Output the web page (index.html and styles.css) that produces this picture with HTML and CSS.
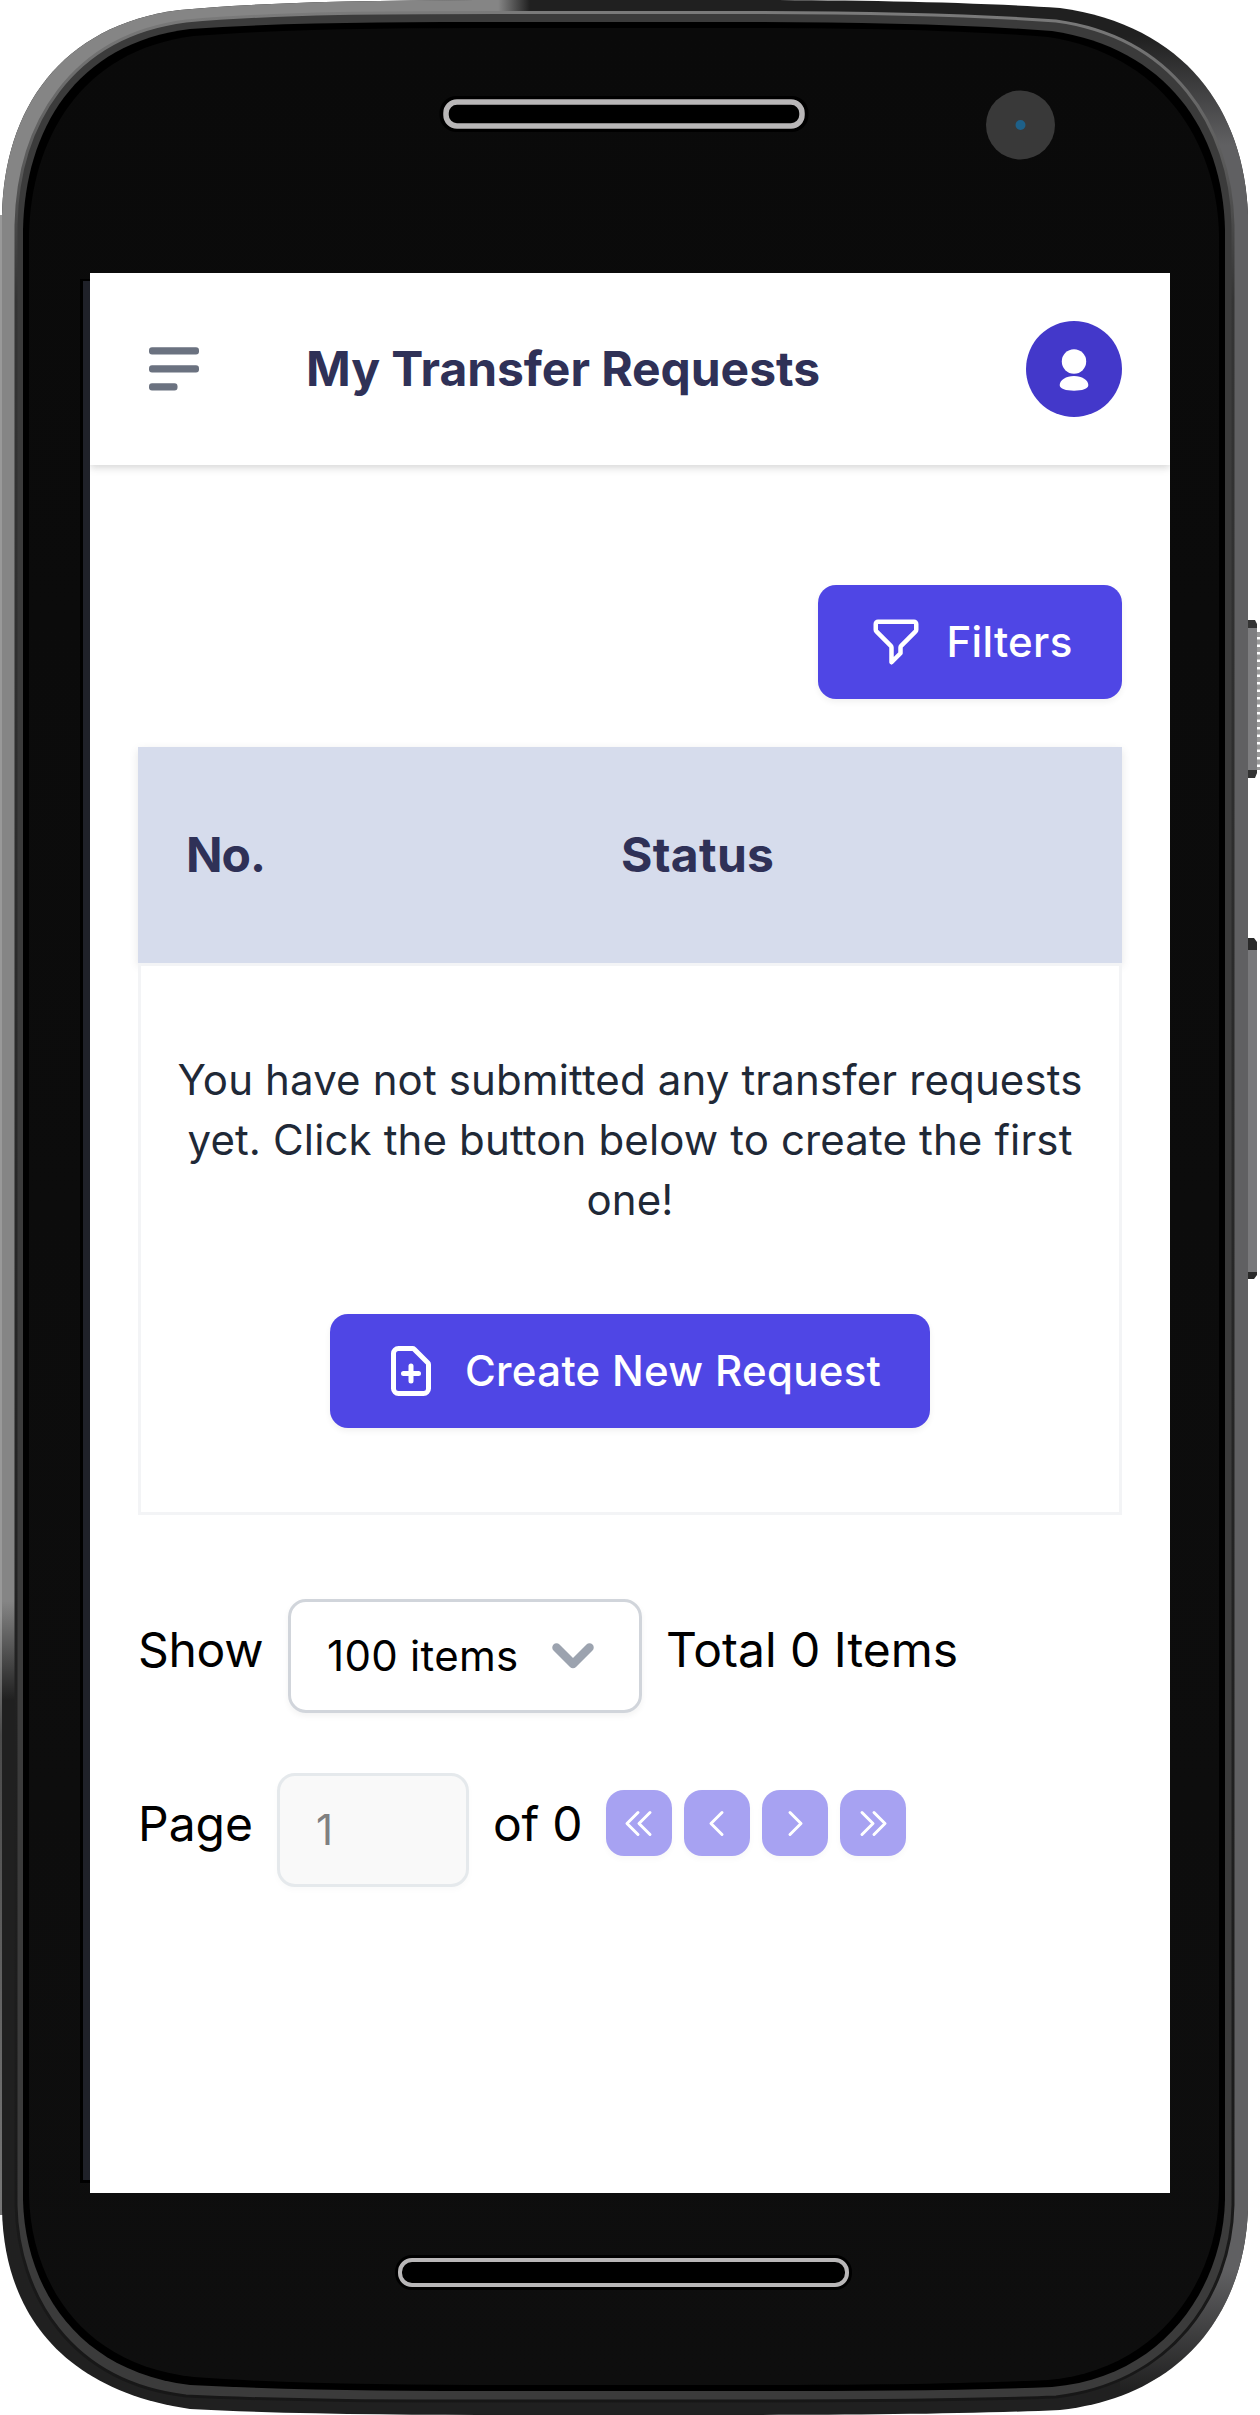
FILE: index.html
```html
<!DOCTYPE html>
<html lang="en">
<head>
<meta charset="utf-8">
<title>My Transfer Requests</title>
<link rel="stylesheet" href="styles.css">
</head>
<body>
<div class="device">
  <svg class="frame" viewBox="0 0 1260 2415" aria-hidden="true">
    <defs>
      <path id="shell" d="M2 215C4 110 60 25 180 10C280 1 400 0 520 0H740C850 0 970 2 1060 8C1185 25 1244 110 1248 215V2210C1244 2310 1185 2396 1060 2410C970 2414 850 2415 740 2415H510C400 2415 280 2414 190 2409C60 2390 4 2310 2 2210Z"/>
      <clipPath id="shell-clip"><use href="#shell"/></clipPath>
      <linearGradient id="top-light"><stop offset=".94" stop-color="#858585"/><stop offset="1" stop-color="#858585" stop-opacity="0"/></linearGradient>
      <linearGradient id="left-light" x2="0" y2="1"><stop offset=".93" stop-color="#858585"/><stop offset="1" stop-color="#858585" stop-opacity="0"/></linearGradient>
      <linearGradient id="right-light" x2="0" y2="1"><stop offset=".015" stop-color="#606062" stop-opacity="0"/><stop offset=".06" stop-color="#606062"/><stop offset=".94" stop-color="#606062"/><stop offset=".99" stop-color="#606062" stop-opacity="0"/></linearGradient>
      <linearGradient id="edge" x2="0" y2="1"><stop offset=".7" stop-color="#999"/><stop offset=".76" stop-color="#4a4a4a"/><stop offset="1" stop-color="#777"/></linearGradient>
      <linearGradient id="rim" x2="0" y2="1"><stop offset="0" stop-color="#7a7a7a"/><stop offset=".06" stop-color="#5c5c5c"/><stop offset=".12" stop-color="#343434"/><stop offset="1" stop-color="#171717"/></linearGradient>
      <linearGradient id="glass" x2="0" y2="1"><stop offset="0" stop-color="#0a0a0a"/><stop offset="1" stop-color="#0e0e0e"/></linearGradient>
    </defs>
    <path d="M0 215h3v2000H0z" fill="url(#edge)"/>
    <path d="M1246 620h9l2 4v149l-2 5h-9z" fill="#333"/>
    <path d="M1246 628h11v142h-11z" fill="#7e7e80"/>
    <path d="M1258.500 632v138" stroke="#999" stroke-width="3" stroke-dasharray="5 2.500"/>
    <path d="M1246 938h8l3 4v333l-3 4h-8z" fill="#2a2a2a"/>
    <path d="M1246 950h11v322h-11z" fill="#79797b"/>
    <use href="#shell" fill="#202020"/>
    <g clip-path="url(#shell-clip)">
      <path d="M0 0h530v300H0z" fill="url(#top-light)"/>
      <path d="M0 290h30v1410H0z" fill="url(#left-light)"/>
      <path d="M1120 0h130v2415h-130z" fill="url(#right-light)"/>
    </g>
    <path d="M16 225C18 125 70 36 186 21C290 12 400 12.500 520 12.500H740C850 12.500 960 14 1056 21C1172 37 1231 125 1233 225V2205C1231 2295 1172 2383 1056 2397C960 2401 850 2401 740 2401H520C400 2401 290 2401 186 2396C70 2382 18 2295 16 2205Z" fill="#3b3b3b" stroke="url(#rim)" stroke-width="3"/>
    <path d="M23 230C25 130 75 43 190 29C290 22 400 22 520 22H740C850 22 960 24 1052 31C1166 48 1223 130 1225 230V2200C1223 2285 1166 2377 1052 2387C960 2391 850 2391 740 2391H520C400 2391 290 2390 190 2385C75 2371 25 2285 23 2200Z" fill="#000"/>
    <path d="M29 235C31 140 80 50 194 36C290 28.500 400 28 520 28H740C850 28 960 30 1048 37C1160 54 1217 140 1219 235V2195C1217 2280 1160 2370 1048 2380C960 2384 850 2385 740 2385H520C400 2385 290 2384 194 2377C80 2365 31 2280 29 2195Z" fill="url(#glass)"/>
    <path d="M80 279h10v1904H80z" fill="#000"/>
    <path d="M83 281h7v1899h-7z" fill="#1f2129"/>
    <rect x="445.500" y="102" width="357" height="24" rx="11" fill="#000" stroke="#000" stroke-width="12"/>
    <rect x="446" y="102" width="356" height="24" rx="11" fill="#000" stroke="#b9b7b8" stroke-width="5.500"/>
    <circle cx="1020.500" cy="125" r="34.500" fill="#393939"/>
    <circle cx="1020.500" cy="125" r="5" fill="#1e6088"/>
    <rect x="400" y="2260" width="447" height="25" rx="12" fill="#000" stroke="#000" stroke-width="10"/>
    <rect x="400" y="2260" width="447" height="25" rx="12" fill="#000" stroke="#b9b7b8" stroke-width="4"/>
  </svg>

  <div class="screen">
    <header class="topbar">
      <svg class="menu-icon" viewBox="0 0 50 44"><g fill="#6b7280"><rect width="50" height="7.300" y=".3" rx="3"/><rect width="50" height="7.300" y="18.300" rx="3"/><rect width="28.500" height="7.300" y="36.300" rx="3"/></g></svg>
      <h1 class="title">My Transfer Requests</h1>
      <div class="avatar">
        <svg viewBox="0 0 96 96"><g fill="#fff"><circle cx="48" cy="40.500" r="12.200"/><path d="M48 55C56 55 62.300 59 62.300 64C62.300 68 56 69.700 48 69.700S33.700 68 33.700 64C33.700 59 40 55 48 55Z"/></g></svg>
      </div>
    </header>

    <main class="content">
      <div class="toolbar">
        <button class="btn btn-filter">
          <svg viewBox="0 0 24 24"><path d="M3 4a1 1 0 011-1h16a1 1 0 011 1v2.586a1 1 0 01-.293.707l-6.414 6.414a1 1 0 00-.293.707V17l-4 4v-6.586a1 1 0 00-.293-.707L3.293 7.293A1 1 0 013 6.586V4z"/></svg>
          <span>Filters</span>
        </button>
      </div>

      <section class="table">
        <div class="table-head"><span class="col-no">No.</span><span class="col-status">Status</span></div>
        <div class="table-body">
          <p class="empty">You have not submitted any transfer requests yet. Click the button below to create the first one!</p>
          <button class="btn btn-create">
            <svg viewBox="0 0 24 24"><path d="M9 13h6m-3-3v6m5 5H7a2 2 0 01-2-2V5a2 2 0 012-2h5.586a1 1 0 01.707.293l5.414 5.414a1 1 0 01.293.707V19a2 2 0 01-2 2z"/></svg>
            <span>Create New Request</span>
          </button>
        </div>
      </section>

      <div class="pager-row">
        <span class="label-show">Show</span>
        <div class="select"><span>100 items</span><svg viewBox="0 0 42 27"><path d="M4.500 4.500L21 21L37.500 4.500"/></svg></div>
        <span>Total 0 Items</span>
      </div>
      <div class="pager-row pager-pages">
        <span class="label-page">Page</span>
        <div class="page-input">1</div>
        <span class="label-of">of 0</span>
        <div class="nav">
          <span class="nav-btn"><svg viewBox="0 0 66 66"><path d="M32 22.500L21 33.500L32 44.500M44 22.500L33 33.500L44 44.500"/></svg></span>
          <span class="nav-btn"><svg viewBox="0 0 66 66"><path d="M38 22.500L27 33.500L38 44.500"/></svg></span>
          <span class="nav-btn"><svg viewBox="0 0 66 66"><path d="M28 22.500L39 33.500L28 44.500"/></svg></span>
          <span class="nav-btn"><svg viewBox="0 0 66 66"><path d="M22 22.500L33 33.500L22 44.500M34 22.500L45 33.500L34 44.500"/></svg></span>
        </div>
      </div>
    </main>
  </div>
</div>
</body>
</html>
```
FILE: styles.css
```css
* { box-sizing: border-box; }
body { margin: 0; background: #fff; font-family: Inter, "Liberation Sans", sans-serif; color: #000; }
.device { position: relative; width: 1260px; height: 2415px; padding: 273px 90px 222px; overflow: hidden; }
.frame { position: absolute; inset: 0; width: 1260px; height: 2415px; }
.screen { position: relative; height: 1920px; background: #fff; overflow: hidden; }

.topbar { height: 192px; display: flex; align-items: center; padding: 0 48px 0 59px; background: #fff; box-shadow: 0 3px 9px rgba(0,0,0,.1), 0 3px 6px rgba(0,0,0,.06); }
.menu-icon { width: 50px; height: 44px; }
.title { margin: 0 0 0 107px; font-size: 48px; line-height: 72px; font-weight: 700; letter-spacing: -.06px; color: #2f3157; white-space: nowrap; }
.avatar { margin-left: auto; width: 96px; height: 96px; border-radius: 50%; background: #4338ca; }
.avatar svg { display: block; }

.content { padding: 120px 48px 0; }
.toolbar { display: flex; justify-content: flex-end; }
.btn { display: flex; align-items: center; height: 114px; padding: 0; border: 0; border-radius: 18px; background: #4f46e5; color: #fff; font: 460 42px/60px Inter, "Liberation Sans", sans-serif; letter-spacing: .3px; white-space: nowrap; box-shadow: 0 3px 6px rgba(0,0,0,.06); }
.btn svg { flex: none; fill: none; stroke: #fff; stroke-width: 2; stroke-linecap: round; stroke-linejoin: round; }
.btn-filter { width: 304.500px; padding-left: 51px; gap: 24px; }
.btn-filter svg { width: 54px; height: 54px; }
.btn-create { width: 600px; padding-left: 51px; gap: 24px; margin: 84px auto 0; }
.btn-create svg { width: 60px; height: 60px; }

.table { margin-top: 48px; }
.table-head { height: 216px; display: grid; grid-template-columns: 435px 1fr; align-items: center; padding: 0 48px 2px; background: #d6dcec; color: #2f3157; font-size: 48px; font-weight: 700; box-shadow: 0 3px 9px rgba(0,0,0,.1); }
.col-no { letter-spacing: -1px; }
.col-status { letter-spacing: .3px; }
.table-body { height: 552px; border: 3px solid #f3f4f6; background: #fff; padding: 84px 30px 0; }
.empty { margin: 0; font-size: 42px; line-height: 60px; letter-spacing: .13px; text-align: center; color: #1f2937; }

.pager-row { display: flex; height: 114px; margin-top: 84px; font-size: 48px; line-height: 102px; white-space: nowrap; }
.pager-pages { margin-top: 60px; }
.label-show { width: 150px; letter-spacing: -.3px; }
.select { width: 354px; margin-right: 24px; padding: 0 45px 0 36px; display: flex; align-items: center; justify-content: space-between; border: 3px solid #d1d5db; border-radius: 18px; font-size: 42px; line-height: 60px; letter-spacing: .3px; box-shadow: 0 3px 6px rgba(0,0,0,.05); }
.select svg { width: 42px; height: 27px; fill: none; stroke: #9ca3af; stroke-width: 8.500; stroke-linecap: round; stroke-linejoin: round; }
.label-page { width: 139px; }
.page-input { width: 192px; padding-left: 36px; border: 3px solid #e5e9ec; border-radius: 18px; background: #f9f9f9; color: #808080; font-size: 42px; line-height: 108px; box-shadow: 0 3px 6px rgba(0,0,0,.025); }
.label-of { width: 137px; padding-left: 24px; letter-spacing: -.3px; }
.nav { display: flex; gap: 12px; padding-top: 16.500px; }
.nav-btn { width: 66px; height: 66px; border-radius: 18px; background: #a7a2f2; box-shadow: 0 3px 6px rgba(0,0,0,.03); }
.nav-btn svg { display: block; fill: none; stroke: #fff; stroke-width: 3; stroke-linecap: round; stroke-linejoin: round; }
```
